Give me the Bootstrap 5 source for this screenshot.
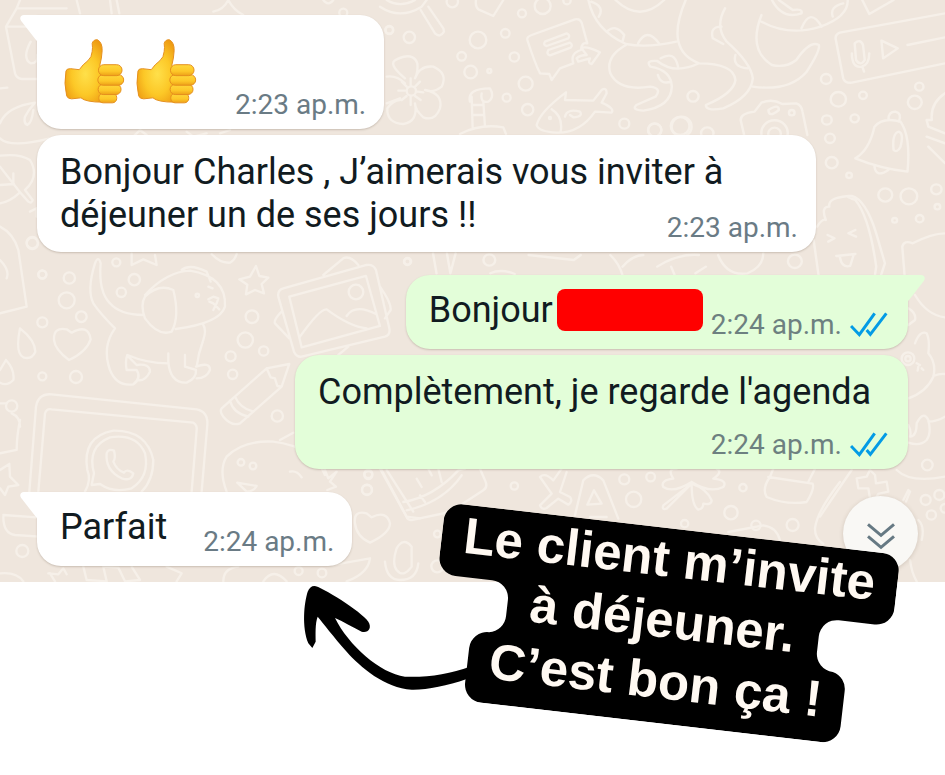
<!DOCTYPE html>
<html lang="fr">
<head>
<meta charset="utf-8">
<meta name="viewport" content="width=device-width, initial-scale=1">
<title>Conversation</title>
<link rel="stylesheet" href="https://cdn.jsdelivr.net/npm/bootstrap@5.3.0/dist/css/bootstrap.min.css">
<style>
body { font-family: Roboto, "Noto Sans", sans-serif; background: #fff; }
.stage { overflow: hidden; min-height: 100vh; }
.chat { background: #efe6dd; padding: 15px 37px 16px; }
.wallpaper { fill: none; stroke: #f6f0e9; stroke-width: 7; stroke-linecap: round; stroke-linejoin: round; }
.bubble { border-radius: 24px; padding: 16px 18px 9px 23px; background: #fff; color: #111b21; font-size: 36px; line-height: 43px; box-shadow: 0 1px 2px rgba(90, 70, 50, .25); max-width: 779px; }
.bubble.sent { background: #e3fed9; }
.bubble.single { padding-top: 14px; min-height: 74px; }
.bubble.tail-in { border-top-left-radius: 0; }
.bubble.tail-out { border-top-right-radius: 0; }
.bubble.wide { min-width: 613px; }
.tail { width: 18px; height: 27px; top: 0; fill: #fff; }
.tail-in .tail { left: -17px; }
.tail-out .tail { right: -17px; fill: #e3fed9; }
.stamp { color: #6a7b85; font-size: 28px; line-height: 30px; white-space: nowrap; }
.stamp.float-end { margin-top: 19px; }
.sent .stamp { color: #6d8080; }
.emoji { gap: 11px; margin: 7px 38px 16px 4px; }
.thumb { width: 61px; height: 66px; }
.ticks { width: 38px; height: 26px; fill: none; stroke: #039be5; stroke-width: 9; margin: 0 2px 0 8px; }
.redacted { width: 146px; height: 42px; border-radius: 8px; background: #f00; }
.gap-turn { margin-top: 23px; }
.gap-same { margin-top: 6px; }
.jump { width: 75px; height: 75px; right: 27px; bottom: 11px; background: #f9f8f5; box-shadow: 0 1px 4px rgba(90, 70, 50, .2); }
.jump svg { fill: none; stroke: #667983; stroke-width: 9; }
.callout { left: 433px; top: 528px; width: 458px; height: 195px; transform: rotate(6.6deg); color: #fff9f2; font: 700 51px/61px "Liberation Sans", Arial, sans-serif; }
.arrow { left: 300px; top: 580px; width: 180px; height: 120px; }
</style>
<script src="https://cdn.jsdelivr.net/npm/bootstrap@5.3.0/dist/js/bootstrap.bundle.min.js"></script>
</head>
<body>
<div class="stage position-relative">
<main class="chat position-relative">
  <svg class="wallpaper position-absolute top-0 start-0 w-100 h-100" viewBox="0 0 945 582" preserveAspectRatio="xMinYMin slice" aria-hidden="true">
    <!-- left edge: juice box, leaves -->
    <g transform="scale(.3333)">
      <path d="M60 0L50 25L18 80L45 220Q50 235 65 237H115M50 25H200M18 80H80M92 125Q65 175 92 190Q115 190 112 165M0 265L22 263M0 370Q20 320 105 308Q85 330 75 350Q70 370 82 375Q95 370 100 330M0 415Q30 445 150 415M0 467Q60 460 90 480Q120 530 75 570L98 600Q95 612 85 605L60 577Q30 605 0 610M0 500L60 577M40 520V550M0 555L42 552M90 635L110 625V650M0 680Q40 700 55 750L80 920L0 940M0 780Q30 810 20 835"/>
      <circle cx="97" cy="728" r="17"/><circle cx="127" cy="823" r="12"/>
      <path d="M230 0L240 40M330 0L335 40M350 0L358 40M640 35Q670 30 685 0Q700 30 730 45M1000 0Q985 20 970 0"/>
      <circle cx="1030" cy="38" r="12"/><circle cx="1168" cy="90" r="12"/>
      <path d="M400 410L420 390L440 405M560 395L580 410L620 400M660 400L690 390"/>
    </g>
    <!-- top centre: magnifier, flower, message, fish, cane -->
    <g transform="translate(380 0) scale(.3333)">
      <path d="M0 20Q60 60 125 20L140 0M20 0Q60 25 105 0M122 30L165 100Q180 115 192 95L190 85L145 20M288 0Q285 20 295 28L340 48L370 0"/>
      <path d="M75 235Q20 190 50 178Q100 155 112 190Q115 215 105 235Q120 195 160 200Q205 220 185 260Q160 280 135 270Q190 280 180 325Q165 365 130 352Q105 330 105 310Q115 365 70 372Q20 370 22 325Q40 300 60 300M20 230Q50 225 75 250M20 310L60 295M55 272H75M112 275L130 277M92 235V255M92 290V315M65 245L80 260M120 245L105 260M65 300L80 288M122 300L105 288"/>
      <circle cx="94" cy="273" r="14"/>
      <path d="M455 105L585 58Q600 55 605 68L622 130Q605 125 603 150Q570 160 580 190L540 205L515 240L508 222L480 220Q465 190 442 120Q440 110 455 105ZM495 125L560 100Q572 105 565 115L500 138Q488 135 495 125M505 150L570 128Q580 135 572 143L510 166Q498 162 505 150M590 175Q600 165 620 165L605 145Q615 135 660 157L635 192Q622 190 630 175L595 185Z"/>
      <path d="M470 375Q480 335 558 277L555 300L640 302L665 270Q680 260 680 280L665 308Q705 325 695 338L645 335Q600 400 530 398Q475 395 470 375ZM515 328Q550 350 542 395M555 350Q560 325 600 335Q610 350 580 352L570 345M275 290L278 385M310 305L315 380M270 305Q260 265 330 265Q345 290 325 305Q300 310 305 280M275 315H310M276 345H312M240 402Q300 370 370 382L378 402"/>
      <circle cx="510" cy="354" r="3"/>
      <circle cx="28" cy="90" r="11"/><circle cx="88" cy="112" r="17"/><circle cx="294" cy="120" r="25"/><circle cx="376" cy="100" r="13"/><circle cx="245" cy="169" r="13"/><circle cx="403" cy="171" r="14"/><circle cx="272" cy="216" r="19"/><circle cx="328" cy="213" r="6"/><circle cx="437" cy="251" r="21"/><circle cx="380" cy="293" r="12"/><circle cx="443" cy="329" r="17"/><circle cx="426" cy="40" r="12"/><circle cx="488" cy="18" r="24"/><circle cx="217" cy="5" r="17"/><circle cx="561" cy="2" r="11"/><circle cx="733" cy="371" r="15"/><circle cx="824" cy="390" r="20"/><circle cx="905" cy="380" r="30"/>
    </g>
    <!-- top right: octopus, voice note, camera, bell, ice lolly -->
    <g transform="translate(400 0) scale(.3476 .3333)">
      <path d="M542 0Q560 90 650 132Q710 145 795 125M620 0Q690 70 760 0M822 0Q760 150 860 190M650 135Q590 170 605 220Q630 275 720 260Q755 265 735 290L680 315Q665 330 700 332Q780 320 782 260Q780 210 720 200Q705 180 740 183Q790 225 860 190Q960 190 965 240Q960 280 880 315Q880 335 930 325Q1010 290 1015 235Q1010 190 940 125Q905 80 935 25M1040 65Q1120 110 1210 80Q1290 50 1288 0M1040 45Q1000 150 1070 195Q1110 205 1140 180Q1180 120 1205 135Q1210 150 1170 215Q1120 275 1015 260M1070 0Q1100 60 1155 40Q1160 25 1130 30L1090 0M550 5Q590 20 572 50M595 95Q620 70 645 105L640 125M685 130Q710 80 745 130M925 80Q890 80 900 115L930 132M750 175Q790 150 800 200M742 225Q750 255 780 245M965 165Q955 200 1000 205M1155 85Q1180 20 1213 80M1245 50Q1235 20 1275 10"/>
      <path d="M1568 40L1265 98Q1250 105 1254 120L1275 235Q1280 250 1300 248L1568 190M1330 0L1350 42L1420 0M1308 130Q1325 115 1332 135L1337 180Q1325 200 1312 180ZM1300 160Q1300 205 1328 200Q1350 195 1350 160M1330 200L1335 215M1385 122L1432 145L1390 175ZM1460 135L1568 112"/>
      <path d="M990 405L980 360Q980 340 1020 335L1040 308Q1070 295 1100 312L1140 310Q1155 315 1158 335L1172 405M1060 330Q1090 310 1090 330Q1060 355 1060 330M1040 405A38 38 0 1 1 1115 405M1060 405A18 18 0 1 1 1095 405"/>
      <circle cx="1127" cy="338" r="8"/><circle cx="733" cy="390" r="19"/><circle cx="806" cy="378" r="27"/><circle cx="884" cy="400" r="18"/><circle cx="843" cy="289" r="16"/>
      <path d="M1310 475Q1350 450 1365 380Q1390 350 1440 365Q1470 410 1460 515Q1380 505 1310 475ZM1420 450Q1415 400 1435 395Q1450 400 1440 440Q1430 460 1420 450M1365 500Q1370 535 1405 510M1405 360Q1405 335 1425 335Q1445 340 1435 365"/>
      <path d="M1568 280Q1525 310 1530 360H1515L1520 380L1568 400M1515 410L1568 430M1520 440L1568 490M1190 720L1210 870M1200 680Q1215 655 1225 660Q1210 620 1235 620Q1230 590 1300 588Q1340 600 1370 700L1395 790L1370 870M1300 588Q1270 585 1310 600Q1350 650 1370 800L1360 870M1230 705L1250 715L1232 725M1310 690L1290 700L1312 710M1255 768L1310 762M1265 768Q1270 805 1295 798L1305 765M1455 870L1445 740Q1450 720 1475 730Q1530 700 1568 700M95 760L105 820M135 760L145 820L160 760M370 765L500 780L520 765M605 765Q630 790 640 825M640 800Q670 765 700 765M915 765Q940 830 1000 820Q1045 800 1045 760M260 820Q290 805 330 822M740 800Q800 760 860 765M780 800L790 825M850 820L880 800"/>
      <circle cx="1226" cy="237" r="15"/><circle cx="1261" cy="298" r="22"/><circle cx="1332" cy="286" r="11"/><circle cx="1494" cy="260" r="12"/><circle cx="1481" cy="307" r="20"/><circle cx="1228" cy="360" r="14"/><circle cx="1308" cy="355" r="12"/><circle cx="1237" cy="415" r="14"/><circle cx="1242" cy="488" r="17"/><circle cx="1292" cy="526" r="8"/><circle cx="1396" cy="585" r="20"/><circle cx="1464" cy="589" r="24"/><circle cx="1543" cy="568" r="15"/><circle cx="1546" cy="620" r="8"/><circle cx="1495" cy="656" r="11"/><circle cx="1423" cy="661" r="7"/><circle cx="1136" cy="784" r="20"/><circle cx="257" cy="780" r="17"/><circle cx="22" cy="784" r="10"/>
    </g>
    <!-- left: dog, photo, pencil, laptop, dinosaur -->
    <g transform="translate(0 240) scale(.3333)">
      <path d="M285 70Q295 45 302 70Q295 155 330 190Q360 225 430 225M285 70Q260 150 280 190Q300 220 345 265Q305 320 330 390Q350 440 400 433Q425 415 410 390H380Q375 365 382 345Q440 370 505 370V340M385 350L410 375Q450 370 450 395Q435 425 412 420M505 365Q510 430 560 428Q590 415 588 390L555 380V345M588 380Q630 365 630 390Q620 415 590 415M590 380Q595 340 610 300Q620 270 610 255M520 150Q475 130 435 170Q420 195 435 235Q475 290 515 275Q540 230 520 150ZM435 165Q500 95 570 92Q680 110 675 200Q660 250 527 267M545 90Q570 70 620 95L632 125M625 140L638 145M625 178L640 170L655 175L650 190L640 210M628 185L640 190L658 208"/>
      <circle cx="592" cy="166" r="5"/>
      <path d="M395 40V75L430 58L470 75L465 45M635 42Q660 70 690 68Q705 60 710 42M768 78L778 108L805 113L785 132L792 160L765 150L738 163L742 134L718 118L750 110ZM162 300Q160 260 200 268L215 278Q265 250 272 298Q260 335 207 360Q165 330 162 300ZM60 265Q105 300 106 335Q95 360 70 352Q45 340 60 265ZM18 360Q45 390 40 420Q20 440 0 428M18 360L0 390"/>
      <path d="M850 145L1100 75Q1120 72 1128 90L1168 265Q1172 285 1155 290L905 350Q890 352 882 335L835 170Q832 150 850 145ZM868 170L1098 108L1140 258L905 322ZM900 290Q960 205 980 208Q1050 260 1100 265M1040 228Q1065 190 1128 222M970 105L1030 55Q1050 45 1075 75M1140 140Q1175 190 1172 210L1155 235M845 215Q820 240 825 250L868 295M1015 345L1045 320"/>
      <circle cx="1068" cy="156" r="22"/>
      <path d="M665 505L800 385L868 372L845 440L720 550Q695 560 670 530Q658 515 665 505ZM800 385L812 412L825 415L832 438L845 440M690 482Q700 520 745 530M705 470Q720 505 760 515"/>
      <path d="M88 755L108 500Q115 460 155 463L590 508Q625 515 622 555L605 755M115 755L135 520Q140 505 155 508L580 548Q592 555 590 570L575 755M255 755Q275 720 262 690Q245 590 340 572Q440 570 460 660Q460 720 425 755M275 735L282 700Q260 620 330 592Q410 580 435 640Q450 710 395 745Q340 760 300 732ZM320 640Q325 625 342 632Q348 655 340 665Q350 690 372 698Q380 685 400 700Q395 725 365 715Q315 690 320 640Z"/>
      <path d="M680 755Q655 690 680 650Q730 600 820 605Q940 620 975 705M840 600L880 578M975 690L985 715L1010 695L990 725L1008 740L982 750M870 695Q890 690 905 712M712 728L770 738Q760 755 740 755ZM1145 690L1220 830L1260 835M1160 690L1240 815M0 490H20M60 540Q50 590 50 630L0 640M35 520Q60 530 60 560M28 672L30 710L55 735L25 740L15 765L0 745M0 690L28 672M10 825L110 832M10 830Q10 880 45 885L120 890M1065 850Q1060 810 1100 820L1115 832Q1160 810 1170 850Q1170 880 1110 908Q1070 890 1065 850ZM1190 990Q1175 970 1190 925Q1210 890 1235 920V980Q1210 1015 1190 990M1155 965Q1160 1020 1200 1020Q1250 1020 1255 970M1000 975L1110 955Q1105 1000 1040 1024M670 1024Q670 985 715 980M790 1024Q820 980 860 1024M145 1000L175 1003L190 985L200 1003M150 1000L165 1024M250 980L260 1020L320 1024L310 980L355 983L375 1024L420 1020L395 980M500 980L545 1000L530 1024M0 1000Q50 995 70 1024"/>
      <circle cx="349" cy="67" r="12"/><circle cx="403" cy="119" r="17"/><circle cx="364" cy="157" r="14"/><circle cx="127" cy="104" r="12"/><circle cx="208" cy="114" r="17"/><circle cx="200" cy="181" r="24"/><circle cx="244" cy="230" r="16"/><circle cx="127" cy="247" r="15"/><circle cx="127" cy="409" r="12"/><circle cx="228" cy="411" r="18"/><circle cx="756" cy="230" r="19"/><circle cx="736" cy="300" r="23"/><circle cx="791" cy="333" r="14"/><circle cx="692" cy="349" r="15"/><circle cx="698" cy="403" r="14"/><circle cx="832" cy="528" r="17"/><circle cx="35" cy="498" r="17"/><circle cx="723" cy="667" r="10"/><circle cx="759" cy="678" r="10"/><circle cx="1105" cy="702" r="12"/><circle cx="1101" cy="749" r="15"/><circle cx="67" cy="933" r="18"/><circle cx="896" cy="993" r="12"/><circle cx="966" cy="999" r="13"/><circle cx="1222" cy="65" r="10"/><circle cx="97" cy="10" r="17"/>
    </g>
    <!-- bottom centre: sneaker, letters, clover -->
    <g transform="translate(340 462) scale(.3333)">
      <path d="M120 20L200 165Q205 178 225 172L330 150L430 85Q445 75 435 55L420 20M190 120Q280 105 355 25L375 20M200 145Q310 120 365 40M230 50L245 75M240 100L255 120M265 20L275 40M295 20L305 60M600 45Q615 30 640 55L665 20M600 45L635 95L600 130Q605 145 620 138L655 110L685 128Q700 118 690 105L660 90L680 30M705 160L730 55Q760 25 790 55L835 170M762 85L742 128L785 125ZM750 165H800M1055 60Q1000 95 970 75Q960 55 1000 50Q980 20 1010 20M1055 60Q1110 95 1150 75Q1165 55 1120 50Q1150 30 1130 20M1055 65Q1055 130 1075 143Q1090 140 1090 125Q1115 130 1115 115Q1100 80 1055 65M1055 65L970 130Q965 145 980 140ZM1300 20L1290 45Q1265 80 1280 105Q1340 130 1400 120Q1425 80 1418 65L1285 45M1425 20L1405 60M1500 60Q1430 150 1425 200Q1425 230 1450 245M1165 210L1270 190Q1310 195 1320 235"/>
      <circle cx="85" cy="39" r="12"/><circle cx="81" cy="84" r="15"/><circle cx="292" cy="216" r="10"/><circle cx="292" cy="313" r="18"/><circle cx="523" cy="72" r="11"/><circle cx="853" cy="52" r="15"/><circle cx="932" cy="45" r="13"/><circle cx="881" cy="112" r="23"/><circle cx="1209" cy="77" r="11"/><circle cx="1173" cy="152" r="20"/><circle cx="1358" cy="189" r="18"/><circle cx="1034" cy="185" r="11"/><circle cx="1248" cy="190" r="14"/>
    </g>
    <!-- right edge: cat, gamepad -->
    <g transform="translate(820 240) scale(.3333)">
      <path d="M285 165Q320 225 375 232M265 205Q290 220 285 240L265 255M285 310Q300 270 320 280Q330 300 325 340Q350 370 340 410Q320 455 265 475M340 408Q360 400 375 402M265 555Q275 575 270 590Q290 590 290 550Q310 510 325 540Q335 580 320 600Q300 620 265 608M325 545Q350 545 375 530M230 690Q270 730 375 710M110 715L140 710L150 690L165 705L168 730L200 725L205 755L175 762L170 770M110 715L115 745L145 745L150 775M250 780L265 750L270 755L258 785M290 370L300 375M305 385L310 390M295 380L293 392M0 830Q40 770 95 690M295 840Q315 860 305 900M270 960Q275 1000 290 1024"/>
      <circle cx="264" cy="356" r="19"/><circle cx="264" cy="356" r="8"/><circle cx="322" cy="675" r="16"/><circle cx="317" cy="780" r="15"/><circle cx="358" cy="765" r="15"/><circle cx="334" cy="825" r="14"/><circle cx="375" cy="805" r="13"/>
    </g>
  </svg>

  <svg width="0" height="0" class="position-absolute" aria-hidden="true">
    <defs>
      <radialGradient id="skin" cx=".5" cy=".55" r=".6"><stop offset="0" stop-color="#ffe04a"/><stop offset=".55" stop-color="#fcc827"/><stop offset="1" stop-color="#ee9b12"/></radialGradient>
      <linearGradient id="finger" x1="0" y1="0" x2="0" y2="1"><stop offset="0" stop-color="#ffd83c"/><stop offset=".6" stop-color="#fdc728"/><stop offset="1" stop-color="#eea018"/></linearGradient>
      <g id="thumb-art" stroke="#e58f1d" stroke-width="3">
        <path fill="url(#skin)" d="M50 123Q52 115 64 116L90 119Q101 103 116 92Q128 82 129 64Q131 52 129 40Q133 27 145 29Q160 37 159 62Q158 84 152 106L170 140L160 217Q110 217 95 204L67 207Q55 207 52 198Q43 160 50 123Z"/>
        <rect fill="url(#finger)" x="149" y="190" width="54" height="29" rx="13"/>
        <rect fill="url(#finger)" x="147" y="163" width="69" height="31" rx="15"/>
        <rect fill="url(#finger)" x="146" y="134" width="78" height="32" rx="16"/>
        <rect fill="url(#finger)" x="148" y="104" width="71" height="33" rx="16"/>
      </g>
      <path id="tail-left" d="M18 0H4C0 0 -1 4 2 7L16 25L18 27Z"/>
      <path id="tail-right" d="M0 0H14C18 0 19 4 16 7L2 25L0 27Z"/>
      <path id="tick-art" d="M3 42L28 68L74 4M50 54L61 67L109 4"/>
    </defs>
  </svg>

  <div class="position-relative d-flex flex-column align-items-start">
    <div class="bubble tail-in position-relative d-flex align-items-end">
      <svg class="tail position-absolute" aria-hidden="true"><use href="#tail-left"/></svg>
      <div class="emoji d-flex" role="img" aria-label="Deux pouces levés">
        <svg class="thumb" viewBox="44 24 184 198"><use href="#thumb-art"/></svg>
        <svg class="thumb" viewBox="44 24 184 198"><use href="#thumb-art"/></svg>
      </div>
      <span class="stamp">2:23 ap.m.</span>
    </div>

    <div class="bubble gap-same clearfix">Bonjour Charles , J’aimerais vous inviter à déjeuner un de ses jours !! <span class="stamp float-end">2:23 ap.m.</span></div>

    <div class="bubble sent single tail-out gap-turn position-relative d-flex align-items-start align-self-end">
      <svg class="tail position-absolute" aria-hidden="true"><use href="#tail-right"/></svg>
      <span>Bonjour</span>
      <span class="redacted ms-1 me-2"></span>
      <span class="stamp align-self-end d-flex align-items-center">2:24 ap.m.<svg class="ticks" viewBox="0 0 114 78" role="img" aria-label="Lu"><use href="#tick-art"/></svg></span>
    </div>

    <div class="bubble wide sent gap-same d-flex flex-column align-self-end">
      <div>Complètement, je regarde l'agenda</div>
      <span class="stamp mt-3 align-self-end d-flex align-items-center">2:24 ap.m.<svg class="ticks" viewBox="0 0 114 78" role="img" aria-label="Lu"><use href="#tick-art"/></svg></span>
    </div>

    <div class="bubble single tail-in gap-turn position-relative d-flex align-items-start">
      <svg class="tail position-absolute" aria-hidden="true"><use href="#tail-left"/></svg>
      <span class="me-4">Parfait</span>
      <span class="stamp align-self-end ms-2 ps-1">2:24 ap.m.</span>
    </div>
  </div>

  <button type="button" class="jump btn rounded-circle position-absolute p-0" aria-label="Aller en bas">
    <svg class="mt-1" width="30" height="28" viewBox="109 98 90 84"><path d="M115 105L154 138L193 105M115 141L154 174L193 141"/></svg>
  </button>
</main>

<svg class="arrow position-absolute" viewBox="60 300 540 360" aria-hidden="true">
  <path d="M103 318C122 318 245 395 265 425C277 445 264 460 245 455C220 443 190 425 165 414C205 495 300 580 375 590C440 593 510 582 570 560L560 597C500 618 440 630 395 629C315 625 240 560 200 515C160 470 130 430 113 410C105 430 107 465 107 485L97 504L85 490C65 440 72 370 83 335Q90 318 103 318Z"/>
</svg>

<div class="callout position-absolute text-center">
  <svg class="position-absolute top-0 start-0 w-100 h-100" viewBox="0 0 458 195" aria-hidden="true">
    <path d="M18 0H440A18 18 0 0 1 458 18V54A18 18 0 0 1 440 72H404A18 18 0 0 0 386 90V106A18 18 0 0 0 404 124A18 18 0 0 1 418 142V177A18 18 0 0 1 400 195H58A18 18 0 0 1 40 177V142A18 18 0 0 1 58 124A18 18 0 0 0 73 106V90A18 18 0 0 0 55 72H18A18 18 0 0 1 0 54V18A18 18 0 0 1 18 0Z"/>
  </svg>
  <div class="position-relative">Le client m’invite<br>à déjeuner.<br>C’est bon ça !</div>
</div>
</div>
</body>
</html>
